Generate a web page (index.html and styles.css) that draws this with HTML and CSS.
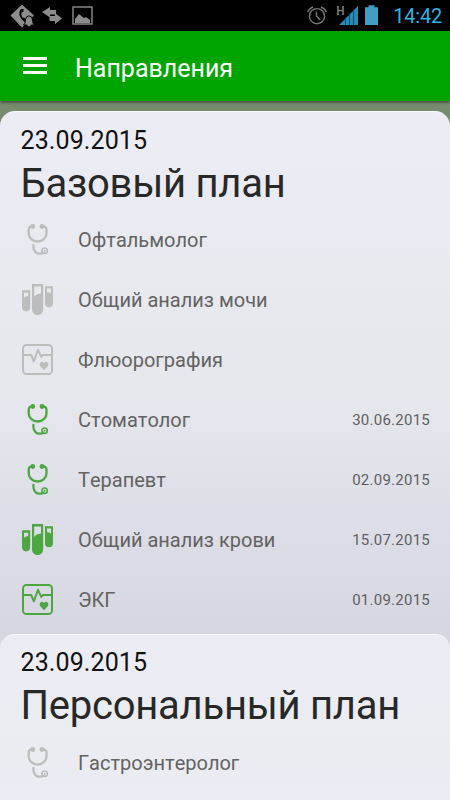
FILE: index.html
```html
<!DOCTYPE html>
<html lang="ru">
<head>
<meta charset="utf-8">
<title>Направления</title>
<link rel="stylesheet" href="styles.css">
</head>
<body>
<svg class="defs" aria-hidden="true">
  <symbol id="scope" viewBox="0 0 31 31">
    <g fill="none" stroke="currentColor" stroke-width="2.3" stroke-linecap="round">
      <path d="M10.5 2.4Q6.7 2 6.7 6V9.3C6.7 14 10.7 17.5 15.6 17.5S24.5 14 24.5 9.3V6Q24.5 2 20.2 2.4"/>
      <path d="M11.4 21V22.5C11.4 27.5 14.3 30.3 19 29.6Q20 29.5 21 28.8"/>
      <circle cx="22.6" cy="26.7" r="2.7" stroke-width="1.6"/>
    </g>
    <g fill="currentColor"><circle cx="10.8" cy="2.5" r="2.4"/><circle cx="20" cy="2.5" r="2.4"/><circle cx="22.6" cy="26.7" r="1"/></g>
  </symbol>
  <symbol id="tubes" viewBox="0 0 31 31">
    <path fill="currentColor" fill-rule="evenodd" d="M0 6.3H8.2V23.3A4.1 4.1 0 0 1 0 23.3ZM2 8.8V13.8Q3 12.6 6.2 12V8.8ZM10 0H21.2V25.5A5.6 5.6 0 0 1 10 25.5ZM12.2 2.4V13Q13.5 10.4 19 9.6V2.4ZM23 2.2H31V19.3A4 4 0 0 1 23 19.3ZM25 4.6V8.4Q27.5 8 29 9.8V4.6Z"/>
  </symbol>
  <symbol id="ecg" viewBox="0 0 31 31">
    <g fill="none" stroke="currentColor" stroke-width="2">
      <rect x="1" y="1" width="29" height="29" rx="3.6"/>
      <path d="M1 11H9.2L11.8 17.3L16 5.8L19.2 12.8L20.8 11H30" stroke-linejoin="round"/>
    </g>
    <path fill="currentColor" d="M22 26.2L18.3 22.2C16.2 19.5 19.8 15.6 22 18.9C24.2 15.6 27.8 19.5 25.7 22.2Z"/>
  </symbol>
</svg>

<div class="status">
  <svg class="status-left" viewBox="0 0 96 31" width="96" height="31">
    <path d="M22 5.5L33 15.5L22 26.5L11.5 15.5Z" fill="#8c8c8c" stroke="#8c8c8c" stroke-width="1.5" stroke-linejoin="round"/>
    <path d="M21 9C17.5 13 20 19 25 22L27 20L24 17.5L22.8 18C21.5 16 21 14 21.5 12.5L23.5 12V9Z" fill="#050505"/>
    <path d="M23.5 25Q25.4 24 25.4 20Q25.7 16.2 29 15.8Q32.3 16.2 32.6 20Q32.6 24 34.5 25H31A2 2 0 0 1 27 25Z" fill="#8c8c8c" stroke="#000" stroke-width="1"/>
    <path d="M42 12L50 7V10H56V14.5H50V17.5ZM62 18.5L55 24V21H49.5V16H55V13Z" fill="#8c8c8c"/>
    <rect x="73" y="7" width="19" height="17" fill="none" stroke="#858585" stroke-width="1.5"/>
    <path d="M75 23V19L79 14L82 16.5L84 18L86 17L90 20V23Z" fill="#8c8c8c"/>
  </svg>
  <svg class="status-right" viewBox="0 0 74 31" width="74" height="31">
    <g fill="none" stroke="#777" stroke-width="1.4">
      <circle cx="17" cy="16.2" r="7.6"/>
      <path d="M16.5 11.5V16L20 20M7.8 12Q9 8.5 13 7M26.2 12Q25 8.5 21 7"/>
    </g>
    <path d="M38 6V15M43 6V15M38 10.5H43" fill="none" stroke="#777" stroke-width="1.7"/>
    <path d="M39 25L58 6V25Z" fill="#268ab5"/>
    <path d="M45.5 18V25M49.5 14V25M53.5 10V25" stroke="#06506e" stroke-width="1"/>
    <path d="M65 7.3H68.5V5.3H74.5V7.3H78V25H65Z" fill="#409dc4"/>
  </svg>
  <span class="clock">14:42</span>
</div>

<header class="bar">
  <div class="burger"><i></i><i></i><i></i></div>
  <h1>Направления</h1>
</header>

<main>
  <section class="card first">
    <p class="date">23.09.2015</p>
    <h2>Базовый план</h2>
    <ul>
      <li><svg><use href="#scope"/></svg><span>Офтальмолог</span></li>
      <li><svg><use href="#tubes"/></svg><span>Общий анализ мочи</span></li>
      <li><svg><use href="#ecg"/></svg><span>Флюорография</span></li>
      <li class="done"><svg><use href="#scope"/></svg><span>Стоматолог</span><time>30.06.2015</time></li>
      <li class="done"><svg><use href="#scope"/></svg><span>Терапевт</span><time>02.09.2015</time></li>
      <li class="done"><svg><use href="#tubes"/></svg><span>Общий анализ крови</span><time>15.07.2015</time></li>
      <li class="done"><svg><use href="#ecg"/></svg><span>ЭКГ</span><time>01.09.2015</time></li>
    </ul>
  </section>
  <section class="card second">
    <p class="date">23.09.2015</p>
    <h2>Персональный план</h2>
    <ul>
      <li><svg><use href="#scope"/></svg><span>Гастроэнтеролог</span></li>
    </ul>
  </section>
</main>
</body>
</html>
```
FILE: styles.css
```css
* { box-sizing: border-box; margin: 0; padding: 0; }
body {
  width: 450px;
  height: 800px;
  overflow: hidden;
  display: flex;
  flex-direction: column;
  background: #778c6f;
  font-family: Roboto, "Liberation Sans", sans-serif;
}
.defs { position: absolute; width: 0; height: 0; }
.status {
  flex: none;
  height: 31px;
  background: #000;
  display: flex;
  align-items: center;
  padding-right: 8px;
}
.status-right { margin-left: auto; overflow: visible; }
.clock {
  width: 56px;
  margin-left: 12px;
  padding-top: 2px;
  text-align: right;
  color: #35b0e0;
  font-size: 20px;
  line-height: 29px;
  letter-spacing: -.2px;
  white-space: nowrap;
}
.bar {
  flex: none;
  height: 70px;
  background: #00a400;
  display: flex;
  align-items: center;
  padding-left: 23px;
  box-shadow: 0 1px 3px rgba(0, 0, 0, .6);
}
.burger { width: 24px; display: grid; gap: 4px; margin-top: -1px; }
.burger i { height: 3px; background: #fff; }
h1 {
  margin: 4px 0 0 28px;
  color: #fff;
  font-size: 25px;
  font-weight: 400;
}
main { flex: 1; margin-top: 10px; min-height: 0; display: flex; flex-direction: column; }
.card { border-radius: 15px 15px 0 0; padding: 15px 20px 0; border-top: 1px solid #fafafd; }
.first {
  flex: none;
  height: 538px;
  background: linear-gradient(#ececf5 0, #e9eaf0 150px, #e6e7ed 290px, #dedee8 400px, #d7d7e1 522px);
}
.second { flex: 1; position: relative; margin-top: -15px; background: linear-gradient(#ececf5 0, #ebecf1 110px, #ebebf4 100%); }
.second { padding-top: 14px; }
.second ul { margin-top: 1px; }
.date { font-size: 25px; line-height: 28px; color: #111; letter-spacing: .1px; padding-left: .5px; }
h2 { font-size: 40px; line-height: 56px; height: 55px; padding-top: 1px; font-weight: 400; color: #282828; white-space: nowrap; letter-spacing: -.25px; padding-left: .5px; }
ul { list-style: none; }
li { height: 60px; display: flex; align-items: center; color: #636363; font-size: 20px; font-kerning: none; }
li svg { width: 31px; height: 31px; margin: -1px 25px 0 2px; color: #bdbdbd; flex: none; }
li.done svg { color: #4ca743; }
time { margin-left: auto; font-size: 15px; letter-spacing: .25px; color: #5f5f62; }
```
